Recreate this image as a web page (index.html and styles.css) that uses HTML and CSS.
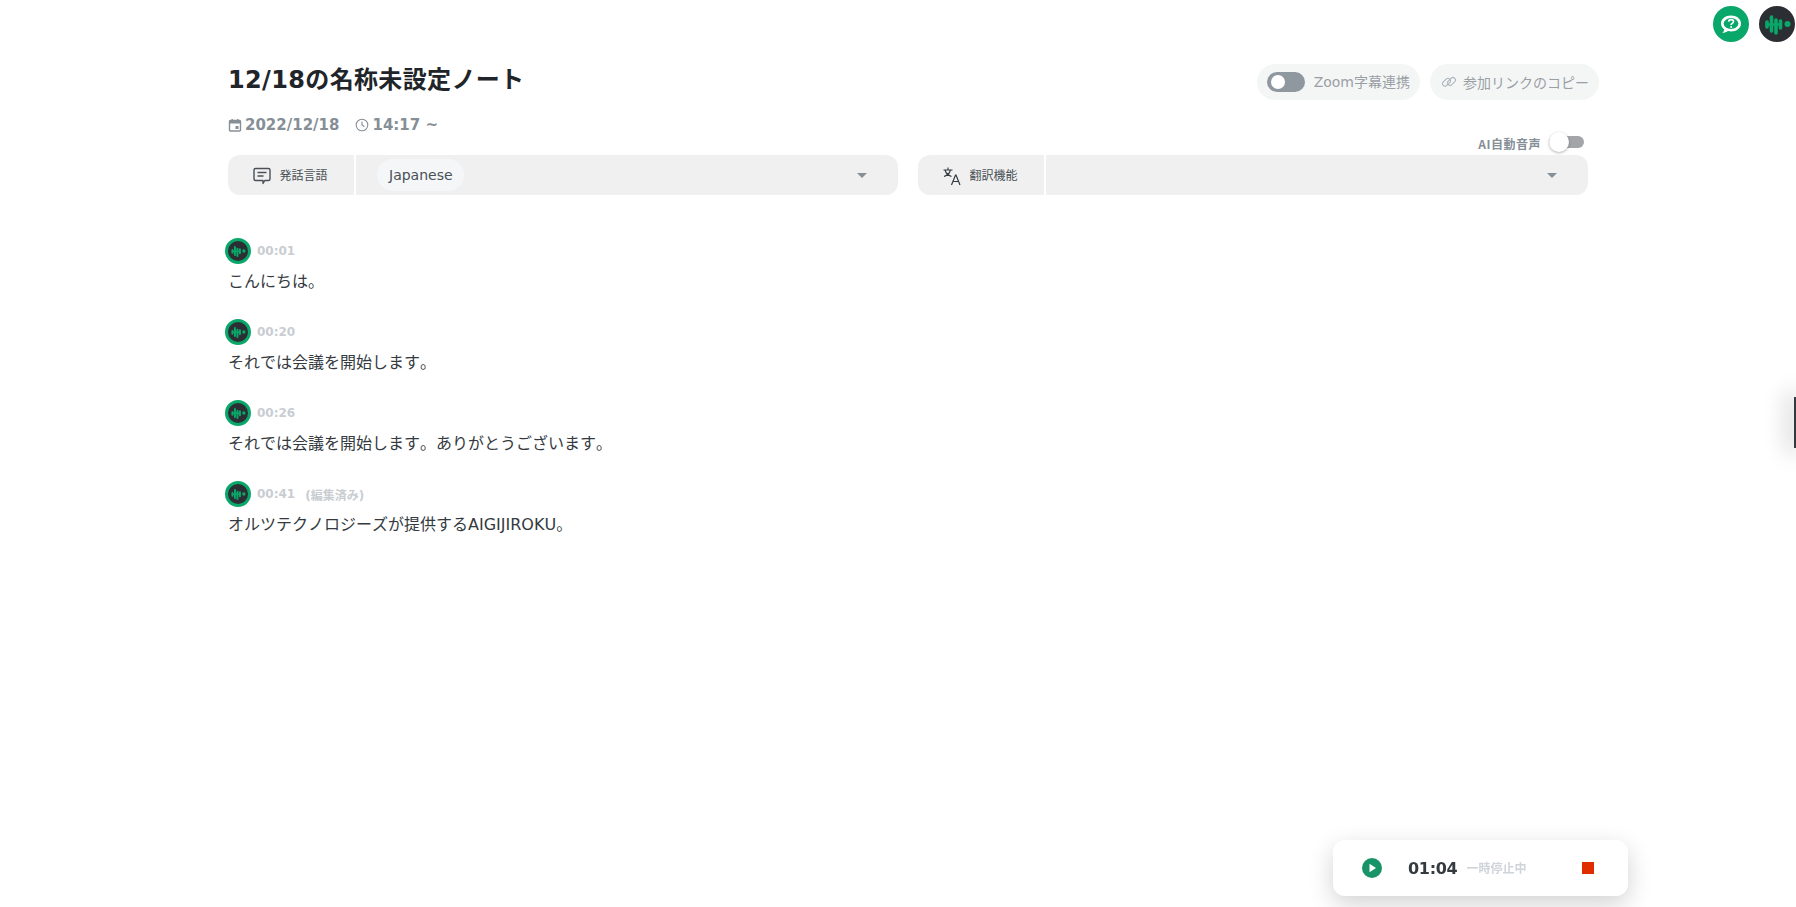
FILE: index.html
```html
<!DOCTYPE html>
<html lang="ja">
<head>
<meta charset="utf-8">
<title>12/18の名称未設定ノート</title>
<link rel="stylesheet" href="styles.css">
</head>
<body>
<svg class="sprites" width="0" height="0" aria-hidden="true">
  <symbol id="wave" viewBox="0 0 36 36">
    <g fill="none" stroke="currentColor" stroke-linecap="round">
      <path d="M8 16v5" stroke-width="3.600"/>
      <path d="M12.500 11v14" stroke-width="3.600"/>
      <path d="M17 14v13" stroke-width="3.600"/>
      <path d="M21.500 15v7" stroke-width="3.600"/>
      <path d="M8 18.500h13" stroke-width="2.400"/>
    </g>
    <circle cx="28.500" cy="18" r="3" fill="currentColor"/>
  </symbol>
</svg>

<div class="top-icons">
  <span class="round help">
    <svg width="26" height="26" viewBox="0 0 26 26">
      <path d="M13 4.500c-5.600 0-10 3.500-10 8 0 2.400 1.300 4.500 3.300 5.900-.2 1.300-1 2.600-2 3.600 2.200-.2 4.200-1 5.700-2 1 .3 2 .4 3 .4 5.600 0 10-3.500 10-8s-4.400-7.900-10-7.900z" fill="#fff"/>
      <ellipse cx="13" cy="12.500" rx="7.300" ry="5.400" fill="#0aa76a"/>
      <path d="M10.600 10.600c.2-1.300 1.200-2 2.500-2s2.400.8 2.400 2c0 1.800-2.400 1.700-2.400 3.300" fill="none" stroke="#fff" stroke-width="1.700"/>
      <circle cx="13.100" cy="16" r="1" fill="#fff"/>
    </svg>
  </span>
  <span class="round dark"><svg class="wave-lg"><use href="#wave"/></svg></span>
</div>

<main class="page">
  <header class="head">
    <div>
      <h1 class="title">12/18の名称未設定ノート</h1>
      <div class="meta">
        <span class="meta-item">
          <svg width="14" height="14" viewBox="0 0 14 14"><path d="M2.500 2.500h9a1 1 0 0 1 1 1v8.500a1 1 0 0 1-1 1h-9a1 1 0 0 1-1-1V3.500a1 1 0 0 1 1-1z" fill="none" stroke="#868e96" stroke-width="1.400"/><path d="M1.500 2.500h11v3h-11zM3.500 1h1.400v2H3.500zM9.100 1h1.400v2H9.100zM7.500 8h3v3h-3z" fill="#868e96"/></svg>
          2022/12/18
        </span>
        <span class="meta-item">
          <svg width="14" height="14" viewBox="0 0 14 14"><circle cx="7" cy="7" r="5.800" fill="none" stroke="#868e96" stroke-width="1.100"/><path d="M7 3.500V7l2.400 1.800" fill="none" stroke="#868e96" stroke-width="1.100"/></svg>
          14:17 ~
        </span>
      </div>
    </div>
    <div class="head-actions">
      <div class="actions">
        <span class="pill">
          <span class="switch"><span class="knob"></span></span>
          <span class="pill-text">Zoom字幕連携</span>
        </span>
        <span class="pill pill-link">
          <svg width="16" height="16" viewBox="0 0 16 16"><g fill="none" stroke="#adb5bd" stroke-width="1.100"><rect x="1" y="5.800" width="9" height="5" rx="2.500" transform="rotate(-45 5.500 8.300)"/><rect x="6" y="5" width="9" height="5" rx="2.500" transform="rotate(-45 10.500 7.500)"/></g></svg>
          <span class="pill-text">参加リンクのコピー</span>
        </span>
      </div>
      <div class="auto-voice">
        <span class="auto-label">AI自動音声</span>
        <span class="mini-switch"><span class="mini-knob"></span></span>
      </div>
    </div>
  </header>

  <div class="selectors">
    <div class="select">
      <div class="select-label">
        <svg width="20" height="20" viewBox="0 0 20 20"><path d="M3.500 2.500h13a1.500 1.500 0 0 1 1.500 1.500v9a1.500 1.500 0 0 1-1.500 1.500h-3.700l-1.800 3v-3H3.500A1.500 1.500 0 0 1 2 13V4a1.500 1.500 0 0 1 1.500-1.500z" fill="none" stroke="#495057" stroke-width="1.400" stroke-linejoin="round"/><path d="M5.500 6.500h9M5.500 10h6" stroke="#495057" stroke-width="1.400"/></svg>
        <span class="label-text">発話言語</span>
      </div>
      <div class="select-value">
        <span class="chip">Japanese</span>
        <span class="caret"></span>
      </div>
    </div>
    <div class="select">
      <div class="select-label">
        <svg width="20" height="20" viewBox="0 0 20 20"><g fill="none" stroke="#343a40" stroke-width="1.100"><path d="M1.500 4h9M6 1.500V4M3 4c.8 3 3.500 5.500 6.500 6.500M8.500 4c-.8 3-3.500 5.500-6.500 6.500"/><path d="m9.500 19 4-10h.5l4 10M11 15.500h5.500" stroke-width="1.200"/></g></svg>
        <span class="label-text">翻訳機能</span>
      </div>
      <div class="select-value">
        <span></span>
        <span class="caret"></span>
      </div>
    </div>
  </div>

  <section class="messages">
    <article class="msg">
      <div class="msg-head">
        <span class="avatar"><svg class="wave-sm"><use href="#wave"/></svg></span>
        <span class="stamp">00:01</span>
      </div>
      <p class="msg-text">こんにちは。</p>
    </article>
    <article class="msg">
      <div class="msg-head">
        <span class="avatar"><svg class="wave-sm"><use href="#wave"/></svg></span>
        <span class="stamp">00:20</span>
      </div>
      <p class="msg-text">それでは会議を開始します。</p>
    </article>
    <article class="msg">
      <div class="msg-head">
        <span class="avatar"><svg class="wave-sm"><use href="#wave"/></svg></span>
        <span class="stamp">00:26</span>
      </div>
      <p class="msg-text">それでは会議を開始します。ありがとうございます。</p>
    </article>
    <article class="msg">
      <div class="msg-head">
        <span class="avatar"><svg class="wave-sm"><use href="#wave"/></svg></span>
        <span class="stamp">00:41</span>
        <span class="stamp edited">(編集済み)</span>
      </div>
      <p class="msg-text">オルツテクノロジーズが提供するAIGIJIROKU。</p>
    </article>
  </section>
</main>

<div class="edge-tab"></div>

<aside class="player">
  <svg width="20" height="20" viewBox="0 0 20 20"><circle cx="10" cy="10" r="10" fill="#189468"/><path d="M7.500 5.800v8.400l6.500-4.200z" fill="#fff"/></svg>
  <span class="player-time">01:04</span>
  <span class="player-status">一時停止中</span>
  <span class="stop"></span>
</aside>
</body>
</html>
```

FILE: styles.css
```css
* { box-sizing: border-box; }
html, body { margin: 0; height: 100%; overflow: hidden; }
body {
  background: #fff;
  color: #343a40;
  font-family: "DejaVu Sans", "Noto Sans CJK JP", sans-serif;
  font-kerning: none;
}
.sprites { position: absolute; }

.top-icons {
  position: fixed;
  top: 6px;
  right: 1px;
  display: flex;
  gap: 10px;
}
.round {
  width: 36px;
  height: 36px;
  border-radius: 50%;
  display: flex;
  align-items: center;
  justify-content: center;
}
.help { background: #0aa76a; }
.dark { background: #2b2e33; color: #0aa76a; }
.wave-lg { width: 36px; height: 36px; }

.page {
  width: 1360px;
  margin-left: 228px;
  padding-top: 63px;
}
.head {
  display: flex;
  justify-content: space-between;
  align-items: flex-start;
  height: 92px;
}
.title {
  margin: 0;
  font-size: 24px;
  line-height: 34px;
  font-weight: 700;
  letter-spacing: .35px;
  color: #212529;
}
.meta {
  display: flex;
  gap: 16px;
  margin-top: 19px;
  font-size: 15px;
  line-height: 18px;
  font-weight: 700;
  color: #868e96;
}
.meta-item { display: flex; align-items: center; gap: 3px; }

.head-actions {
  display: flex;
  flex-direction: column;
  align-items: flex-end;
  margin-top: 1px;
  margin-right: -11px;
}
.actions { display: flex; gap: 10px; }
.pill {
  height: 36px;
  padding: 0 10px;
  display: flex;
  align-items: center;
  gap: 9px;
  border-radius: 18px;
  background: #f4f6f6;
  color: #9a9fa5;
  font-size: 14px;
}
.pill-text { margin-bottom: 2px; }
.pill-link { padding: 0 10px 0 11px; gap: 6px; }
.pill-link .pill-text { margin-bottom: 1px; }
.switch {
  width: 38px;
  height: 20px;
  padding: 3px 4px;
  border-radius: 10px;
  background: #8f979f;
}
.knob {
  display: block;
  width: 14px;
  height: 14px;
  border-radius: 50%;
  background: #fff;
}
.auto-voice {
  display: flex;
  align-items: center;
  gap: 8px;
  margin-top: 33px;
  margin-right: 15px;
}
.auto-label {
  font-size: 12px;
  letter-spacing: .5px;
  font-weight: 700;
  color: #868e96;
  position: relative;
  top: 2px;
  font-family: "Noto Sans CJK JP", sans-serif;
}
.mini-switch {
  position: relative;
  width: 35px;
  height: 12px;
  border-radius: 6px;
  background: #a3a5a8;
}
.mini-knob {
  position: absolute;
  left: 0;
  top: -4px;
  width: 20px;
  height: 20px;
  border-radius: 50%;
  background: #fff;
  box-shadow: 0 1px 3px rgba(0, 0, 0, .3);
}

.selectors {
  display: grid;
  grid-template-columns: 670px 670px;
  gap: 20px;
}
.select {
  height: 40px;
  display: flex;
  background: #f0f0f0;
  border-radius: 12px;
  overflow: hidden;
}
.select-label {
  width: 126px;
  display: flex;
  align-items: center;
  justify-content: center;
  gap: 7px;
  padding-right: 2px;
  font-size: 12px;
  color: #495057;
  font-family: "Noto Sans CJK JP", sans-serif;
}
.select-label svg { margin-top: 2px; }
.label-text { margin-bottom: 2px; }
.select-value {
  flex: 1;
  display: flex;
  align-items: center;
  justify-content: space-between;
  border-left: 2px solid #fff;
  padding: 0 31px 0 21px;
}
.chip {
  height: 32px;
  padding: 0 11px 0 12px;
  display: flex;
  align-items: center;
  border-radius: 16px;
  background: #f4f6f8;
  font-size: 14px;
  color: #495057;
}
.caret {
  width: 0;
  height: 0;
  border-left: 5px solid transparent;
  border-right: 5px solid transparent;
  border-top: 5px solid #868e96;
}

.messages { margin-top: 43px; }
.msg { height: 81px; }
.msg-head {
  display: flex;
  align-items: center;
  gap: 6px;
  height: 26px;
  margin-left: -3px;
}
.avatar {
  width: 26px;
  height: 26px;
  border-radius: 50%;
  background: #2b2e33;
  border: 3px solid #0aa76a;
  color: #0aa76a;
  display: flex;
  align-items: center;
  justify-content: center;
}
.wave-sm { width: 20px; height: 20px; }
.stamp {
  font-size: 12px;
  font-weight: 700;
  color: #c8cdd2;
}
.edited { margin-left: 4px; }
.msg-text {
  margin: 6px 0 0;
  font-size: 16px;
  line-height: 24px;
  color: #343a40;
}

.edge-tab {
  position: fixed;
  right: 0;
  top: 397px;
  width: 2px;
  height: 51px;
  background: #343a40;
  box-shadow: -2px 0 22px 6px rgba(0, 0, 0, .16);
}

.player {
  position: fixed;
  left: 1333px;
  top: 840px;
  width: 295px;
  height: 56px;
  padding-left: 29px;
  display: flex;
  align-items: center;
  background: #fff;
  border-radius: 12px;
  box-shadow: 0 8px 24px rgba(0, 0, 0, .18);
}
.player-time {
  margin-left: 26px;
  font-size: 16px;
  letter-spacing: -.3px;
  font-weight: 700;
  color: #343a40;
}
.player-status {
  margin-left: 9px;
  margin-bottom: 2px;
  font-size: 12px;
  font-weight: 700;
  color: #ced4da;
  font-family: "Noto Sans CJK JP", sans-serif;
}
.stop {
  margin-left: auto;
  margin-right: 34px;
  width: 12px;
  height: 12px;
  background: #e02d00;
}
```
